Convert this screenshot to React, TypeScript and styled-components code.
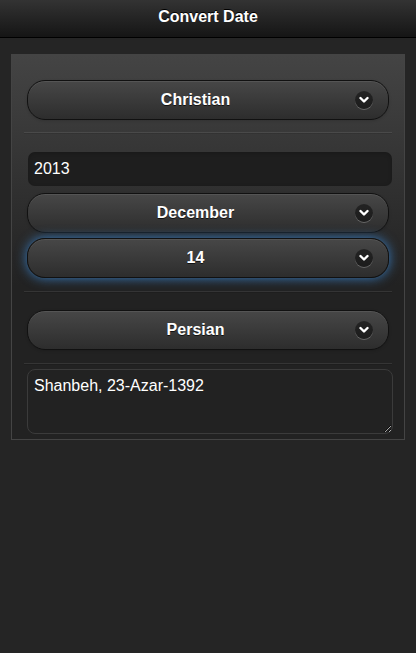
import React from "react";
import styled, { createGlobalStyle, css } from "styled-components";

const GlobalStyle = createGlobalStyle`
  html, body {
    margin: 0;
    padding: 0;
    background: #252525;
    font-family: "Liberation Sans", Arial, sans-serif;
    color: #fff;
  }
`;

const Page = styled.div`
  min-height: 653px;
  background: #252525;
`;

const Header = styled.header`
  height: 37px;
  border-bottom: 1px solid #000;
  background: linear-gradient(#333333, #151515);
  display: flex;
  align-items: center;
  justify-content: center;
`;

const Title = styled.h1`
  margin: 0 0 4px;
  font-size: 16px;
  font-weight: bold;
  color: #fff;
  text-shadow: 0 -1px 0 #000;
`;

const Panel = styled.div`
  margin: 16px 11px 0;
  border: 1px solid #444;
  background: linear-gradient(#444444, #222222 60%, #222222);
  padding: 0 12px;
`;

const Section = styled.div<{ $top: number; $bottom: number; $last?: boolean }>`
  padding: ${(p) => p.$top}px 0 ${(p) => p.$bottom}px;
  display: flex;
  flex-direction: column;
  gap: 5px;
  border-bottom: ${(p) => (p.$last ? "none" : "1px solid rgba(255,255,255,0.09)")};
  box-shadow: ${(p) => (p.$last ? "none" : "0 1px 0 rgba(0,0,0,0.1)")};
`;

const SelectButton = styled.div<{ $focused?: boolean }>`
  margin: 0 3px;
  height: 38px;
  border: 1px solid #111;
  border-radius: 18px;
  background: linear-gradient(#474747, #2d2d2d);
  display: flex;
  align-items: center;
  padding: 0 15px 0 14px;
  box-shadow: inset 0 1px 0 rgba(255, 255, 255, 0.08), 0 1px 3px rgba(0, 0, 0, 0.15);
  ${(p) =>
    p.$focused &&
    css`
      box-shadow: 0 0 12px #387bbe, inset 0 1px 0 rgba(255, 255, 255, 0.08);
    `}
`;

const Label = styled.span`
  flex: 1;
  text-align: center;
  font-size: 16px;
  font-weight: bold;
  color: #fff;
  text-shadow: 0 1px 0 #111;
`;

const IconDisc = styled.span`
  margin-left: 6px;
  width: 18px;
  height: 18px;
  border-radius: 50%;
  background: rgba(0, 0, 0, 0.45);
  box-shadow: 0 1px 0 rgba(255, 255, 255, 0.25);
  display: flex;
  align-items: center;
  justify-content: center;
`;

const TextInput = styled.div`
  margin: 0 0 2px 4px;
  height: 34px;
  box-sizing: border-box;
  border-radius: 7px;
  background: #1e1e1e;
  box-shadow: inset 0 1px 4px rgba(0, 0, 0, 0.2);
  display: flex;
  align-items: center;
  padding: 0 6px;
  font-size: 16px;
  color: #fff;
`;

const Output = styled.textarea`
  margin: 0 -1px 0 3px;
  height: 65px;
  box-sizing: border-box;
  border: 1px solid #3b3b3b;
  border-radius: 8px;
  background: #222;
  color: #fff;
  font-family: "Liberation Sans", Arial, sans-serif;
  font-size: 16px;
  padding: 7px 6px 4px;
  outline: none;
`;

const Chevron = () => (
  <svg width="10" height="8" viewBox="0 0 10 8">
    <path d="M1.5 2 L5 5.5 L8.5 2" fill="none" stroke="#fff" strokeWidth="2.4" strokeLinecap="round" strokeLinejoin="round" />
  </svg>
);

const Select = ({ label, focused }: { label: string; focused?: boolean }) => (
  <SelectButton $focused={focused}>
    <Label>{label}</Label>
    <IconDisc>
      <Chevron />
    </IconDisc>
  </SelectButton>
);

export default function App() {
  return (
    <Page>
      <GlobalStyle />
      <Header>
        <Title>Convert Date</Title>
      </Header>
      <Panel>
        <Section $top={25} $bottom={12}>
          <Select label="Christian" />
        </Section>
        <Section $top={19} $bottom={13}>
          <TextInput>2013</TextInput>
          <Select label="December" />
          <Select label="14" focused />
        </Section>
        <Section $top={18} $bottom={13}>
          <Select label="Persian" />
        </Section>
        <Section $top={5} $bottom={5} $last>
          <Output defaultValue="Shanbeh, 23-Azar-1392" />
        </Section>
      </Panel>
    </Page>
  );
}
